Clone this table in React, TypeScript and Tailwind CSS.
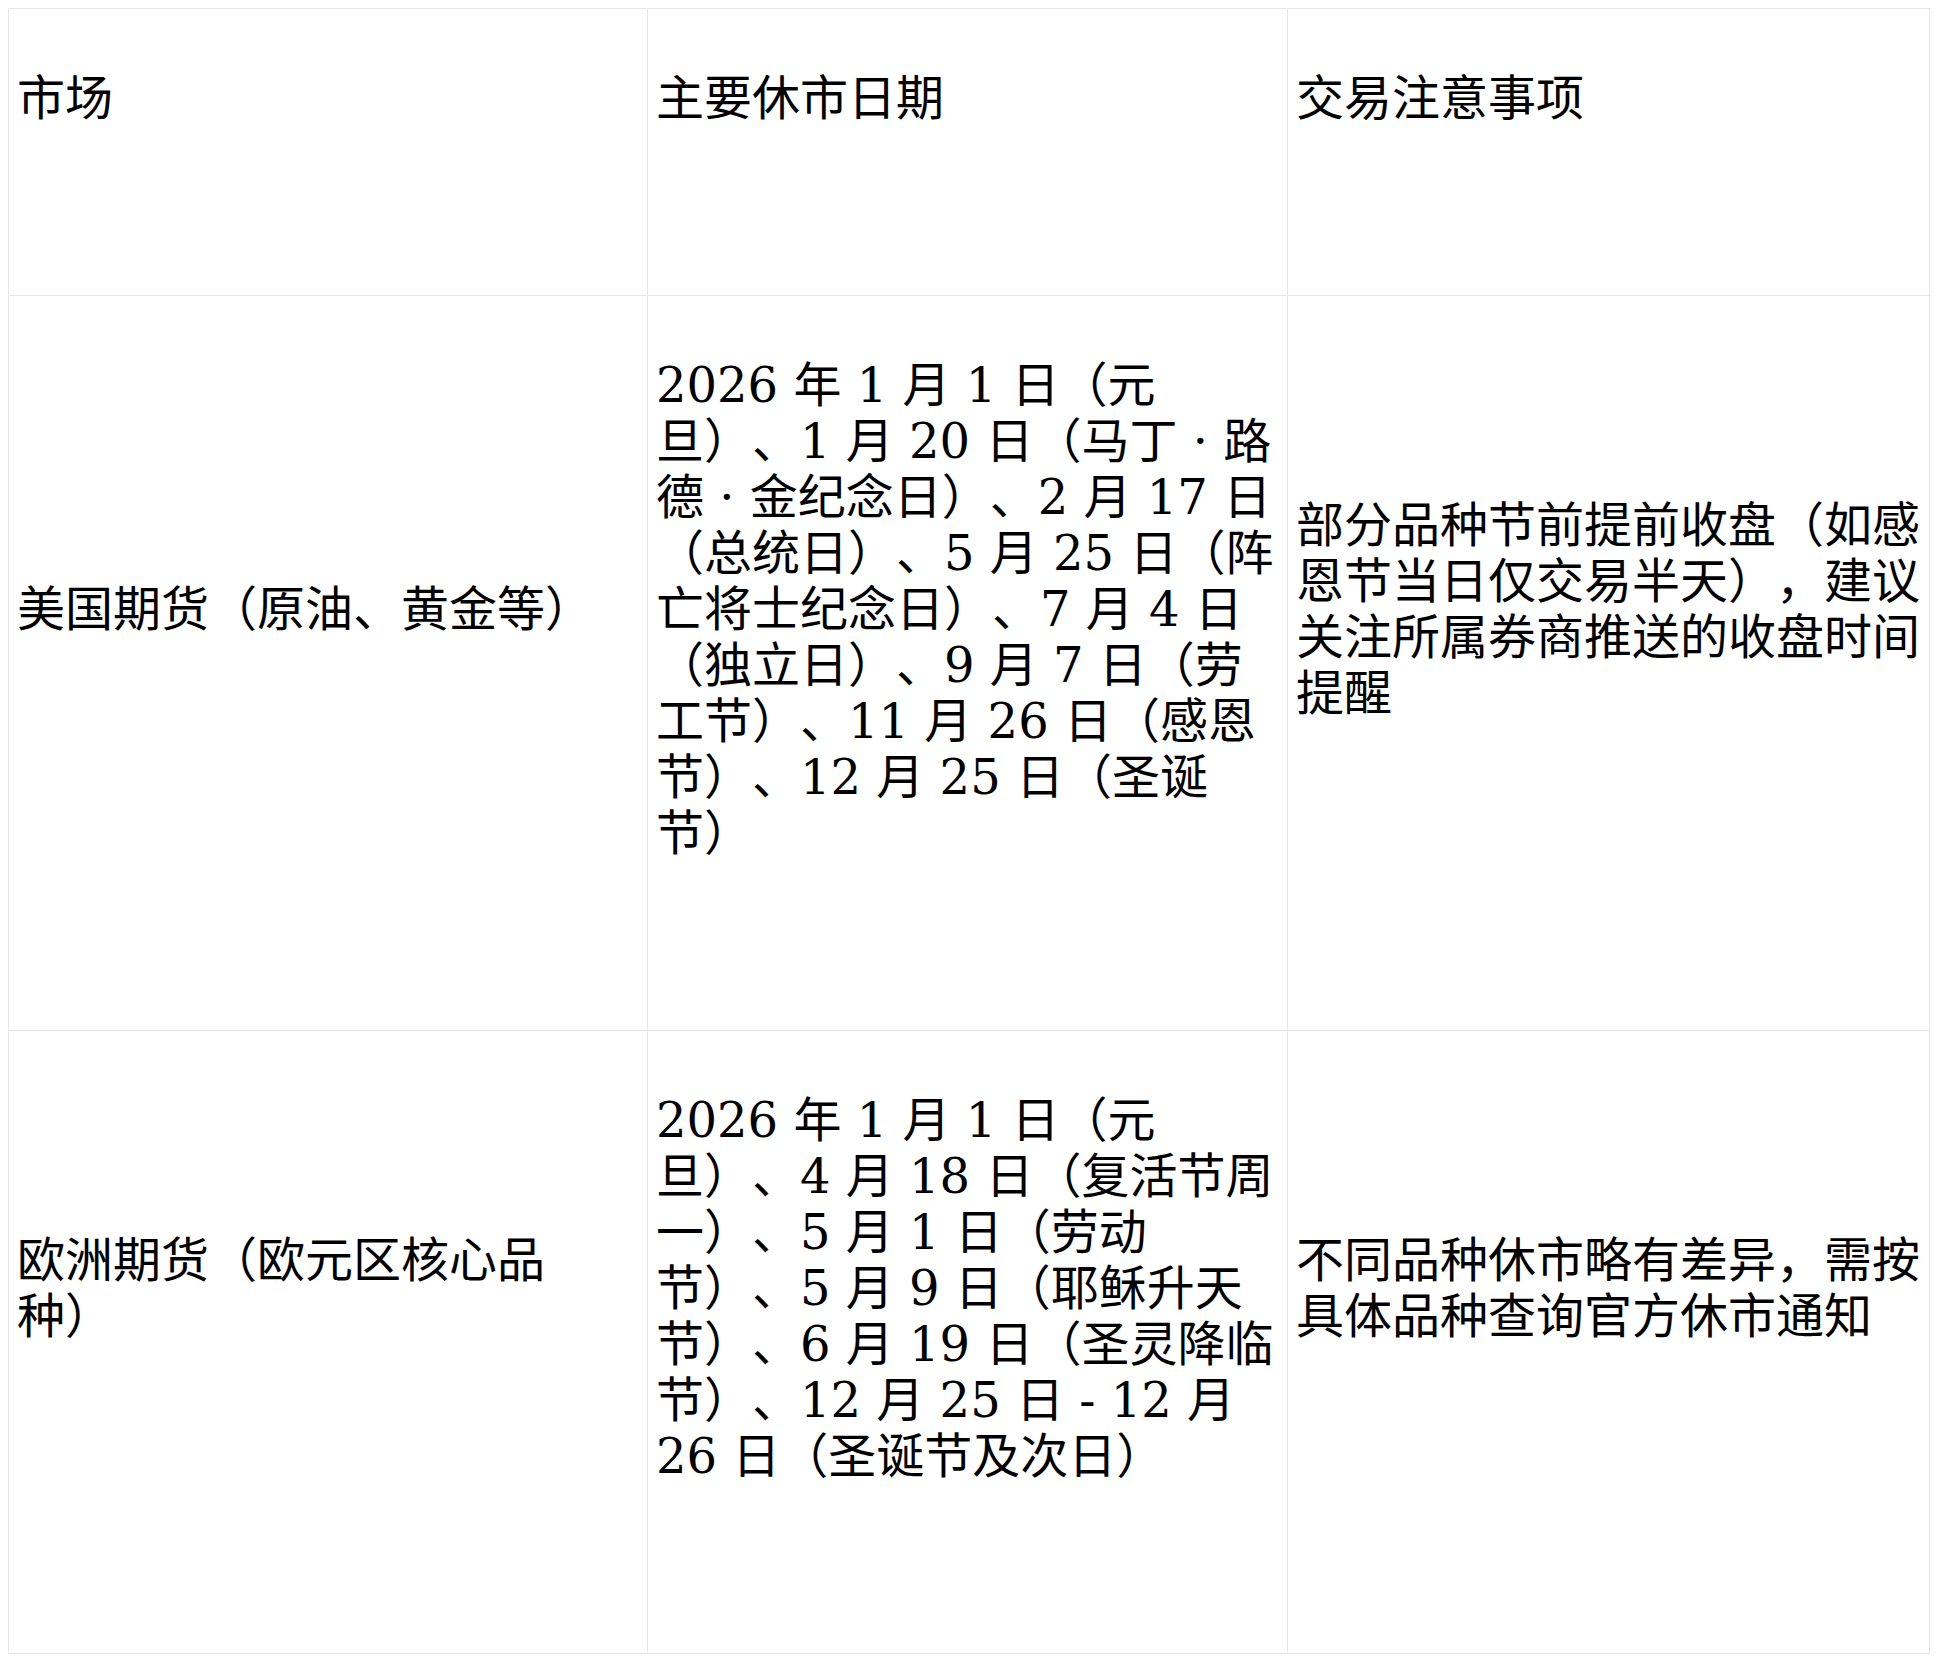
const rows = [
  {
    market: "美国期货（原油、黄金等）",
    dates:
      "2026 年 1 月 1 日（元旦）、1 月 20 日（马丁 · 路德 · 金纪念日）、2 月 17 日（总统日）、5 月 25 日（阵亡将士纪念日）、7 月 4 日（独立日）、9 月 7 日（劳工节）、11 月 26 日（感恩节）、12 月 25 日（圣诞节）",
    notes:
      "部分品种节前提前收盘（如感恩节当日仅交易半天），建议关注所属券商推送的收盘时间提醒",
  },
  {
    market: "欧洲期货（欧元区核心品种）",
    dates:
      "2026 年 1 月 1 日（元旦）、4 月 18 日（复活节周一）、5 月 1 日（劳动节）、5 月 9 日（耶稣升天节）、6 月 19 日（圣灵降临节）、12 月 25 日 - 12 月 26 日（圣诞节及次日）",
    notes: "不同品种休市略有差异，需按具体品种查询官方休市通知",
  },
];

const cell =
  "border border-[#e5e7eb] px-[8px] pt-[61px] pb-[169px] align-middle text-left font-normal";

const App = () => {
  return (
    <div className="bg-white p-[8px] text-black font-['DejaVu_Serif','Noto_Sans_CJK_SC',serif] text-[48px] leading-[56px] [text-spacing-trim:space-all]">
      <table className="table-fixed border-collapse w-[1921px]">
        <colgroup>
          <col className="w-[639px]" />
          <col className="w-[640px]" />
          <col className="w-[642px]" />
        </colgroup>
        <thead>
          <tr>
            <th className={cell}>市场</th>
            <th className={cell}>主要休市日期</th>
            <th className={cell}>交易注意事项</th>
          </tr>
        </thead>
        <tbody>
          {rows.map((row) => (
            <tr key={row.market}>
              <td className={cell}>{row.market}</td>
              <td className={cell}>{row.dates}</td>
              <td className={cell}>{row.notes}</td>
            </tr>
          ))}
        </tbody>
      </table>
    </div>
  );
};

export default App;
